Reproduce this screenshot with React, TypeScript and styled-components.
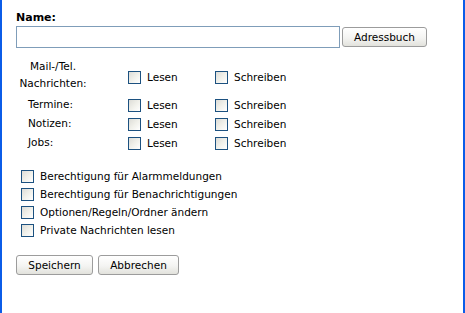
import React from 'react';
import styled, { createGlobalStyle } from 'styled-components';

const GlobalStyle = createGlobalStyle`
  html, body {
    margin: 0;
    padding: 0;
    background: #ffffff;
  }
  body {
    font-family: Tahoma, "DejaVu Sans", Verdana, sans-serif;
    font-size: 10.5px;
    color: #000000;
  }
`;

const Frame = styled.div`
  box-sizing: border-box;
  width: 465px;
  height: 313px;
  border-left: 2px solid #0b5ce8;
  border-right: 2px solid #0b5ce8;
  padding: 11px 14px 0 14px;
`;

const FieldLabel = styled.div`
  font-weight: bold;
  font-size: 11px;
  line-height: 13px;
  margin-bottom: 2px;
`;

const NameRow = styled.div`
  display: flex;
  align-items: center;
  gap: 2px;
`;

const TextInput = styled.input`
  box-sizing: border-box;
  width: 324px;
  height: 22px;
  border: 1px solid #7f9db9;
  padding: 2px 3px;
  font: inherit;
  outline: none;
`;

const Button = styled.button<{ $w: number }>`
  box-sizing: border-box;
  height: 20px;
  width: ${(p) => p.$w}px;
  padding: 0 4px;
  border: 1px solid #9c9c9c;
  border-radius: 3px;
  background: linear-gradient(#ffffff 0%, #f4f4f2 55%, #e2e2dc 100%);
  font: inherit;
  color: #000000;
  cursor: pointer;
`;

const PermGrid = styled.div`
  display: grid;
  grid-template-columns: 112px 87px auto;
  grid-auto-rows: 19px;
  margin-top: 10px;
`;

const RowLabel = styled.div<{ $multi?: boolean }>`
  line-height: 17px;
  padding-left: ${(p) => (p.$multi ? 0 : 12)}px;
  text-align: ${(p) => (p.$multi ? 'center' : 'left')};
  width: ${(p) => (p.$multi ? 74 : 100)}px;
  grid-row: ${(p) => (p.$multi ? 'span 2' : 'auto')};
  white-space: pre-line;
`;

const Check = styled.label`
  display: flex;
  align-items: center;
  gap: 6px;
  line-height: 13px;
`;

const Box = styled.span`
  box-sizing: border-box;
  display: inline-block;
  width: 13px;
  height: 13px;
  border: 1px solid #1c5180;
  background: linear-gradient(135deg, #dcdcd7 0%, #f0f0ea 50%, #ffffff 100%);
  flex: none;
`;

const OptionList = styled.div`
  display: flex;
  flex-direction: column;
  gap: 5px;
  margin-top: 17px;
  padding-left: 5px;
`;

const Actions = styled.div`
  display: flex;
  gap: 5px;
  margin-top: 18px;
`;

const MultiRow = styled.div`
  display: contents;
`;

const SpanCell = styled.div`
  grid-row: span 2;
  display: flex;
  align-items: center;
`;

const rows = [
  { label: 'Mail-/Tel.\nNachrichten:', multi: true },
  { label: 'Termine:' },
  { label: 'Notizen:' },
  { label: 'Jobs:' },
];

const options = [
  'Berechtigung für Alarmmeldungen',
  'Berechtigung für Benachrichtigungen',
  'Optionen/Regeln/Ordner ändern',
  'Private Nachrichten lesen',
];

const CheckItem: React.FC<{ text: string }> = ({ text }) => (
  <Check>
    <Box />
    <span>{text}</span>
  </Check>
);

export default function App() {
  return (
    <>
      <GlobalStyle />
      <Frame>
        <FieldLabel>Name:</FieldLabel>
        <NameRow>
          <TextInput type="text" />
          <Button $w={85}>Adressbuch</Button>
        </NameRow>

        <PermGrid>
          {rows.map((r) =>
            r.multi ? (
              <MultiRow key={r.label}>
                <RowLabel $multi>{r.label}</RowLabel>
                <SpanCell>
                  <CheckItem text="Lesen" />
                </SpanCell>
                <SpanCell>
                  <CheckItem text="Schreiben" />
                </SpanCell>
              </MultiRow>
            ) : (
              <MultiRow key={r.label}>
                <RowLabel>{r.label}</RowLabel>
                <CheckItem text="Lesen" />
                <CheckItem text="Schreiben" />
              </MultiRow>
            )
          )}
        </PermGrid>

        <OptionList>
          {options.map((o) => (
            <CheckItem key={o} text={o} />
          ))}
        </OptionList>

        <Actions>
          <Button $w={77}>Speichern</Button>
          <Button $w={81}>Abbrechen</Button>
        </Actions>
      </Frame>
    </>
  );
}
